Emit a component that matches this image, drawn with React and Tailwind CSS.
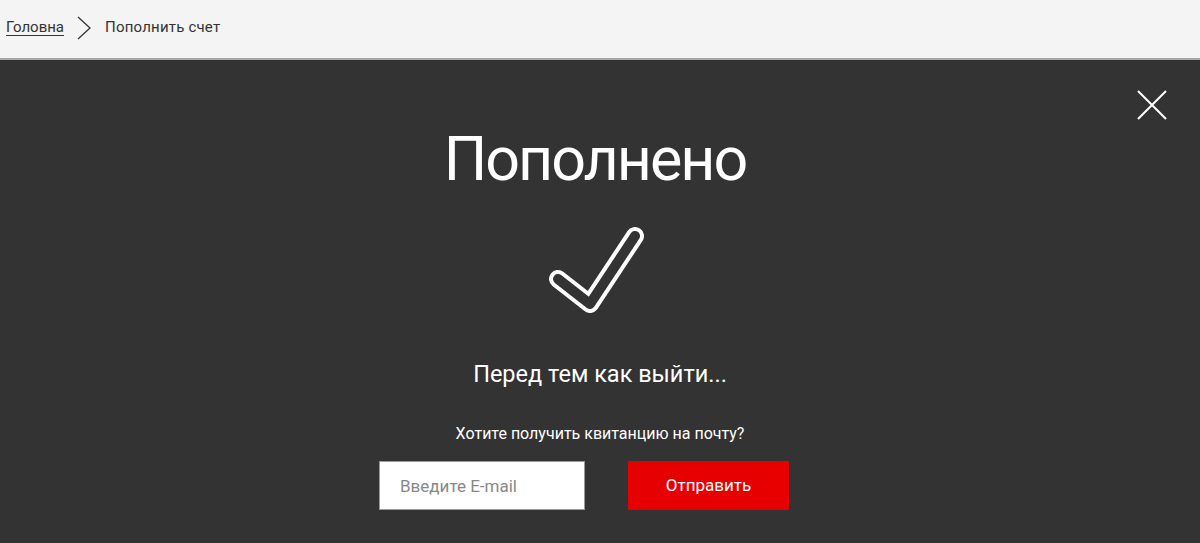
import React from "react";

const CloseIcon = () => (
  <svg width="30" height="30" viewBox="0 0 30 30" className="block">
    <path d="M1 1 L29 29 M29 1 L1 29" stroke="#ffffff" strokeWidth="2" fill="none" />
  </svg>
);

// галочка с обводкой
const CheckOutline = () => (
  <svg width="110" height="100" viewBox="0 0 110 100" className="block">
    <path
      d="M17 59 L49 84 L94 16"
      stroke="#ffffff"
      strokeWidth="18"
      strokeLinecap="round"
      strokeLinejoin="round"
      fill="none"
    />
    <path
      d="M17 59 L49 84 L94 16"
      stroke="#333333"
      strokeWidth="10"
      strokeLinecap="round"
      strokeLinejoin="round"
      fill="none"
    />
  </svg>
);

export default function App() {
  return (
    <div className="w-[1200px] h-[543px] overflow-hidden bg-[#333333] font-['Roboto','Noto_Sans',sans-serif]">
      <div className="h-[60px] bg-[#f4f4f4] border-b-2 border-[#a6a6a6] flex items-center pl-[6px] pb-[3px] text-[15px] text-[#333333]">
        <a href="#" className="underline underline-offset-[3px] decoration-1 leading-none">
          Головна
        </a>
        <svg width="14" height="24" viewBox="0 0 14 24" className="ml-[13px] mr-[14px] block">
          <path d="M1 1 L13 12 L1 23" stroke="#333333" strokeWidth="1.3" fill="none" />
        </svg>
        <span className="leading-none tracking-[0.2px]">Пополнить счет</span>
      </div>

      <div className="relative flex flex-col items-center text-white">
        <button className="absolute right-[33px] top-[30px]">
          <CloseIcon />
        </button>

        <h1 className="mt-[59px] ml-[-10px] text-[61px] leading-[80px] font-normal tracking-[-2px]">Пополнено</h1>
        <div className="mt-[21px] mr-[8px]">
          <CheckOutline />
        </div>
        <p className="mt-[39px] text-[23.5px] leading-[30px]">Перед тем как выйти...</p>
        <p className="mt-[35px] text-[16px] leading-[20px]">Хотите получить квитанцию на почту?</p>
        <div className="mt-[17px] mr-[32px] flex gap-[43px]">
          <input
            type="text"
            placeholder="Введите E-mail"
            className="w-[206px] h-[49px] bg-white border border-[#9a9a9a] px-[20px] text-[17px] text-[#333] placeholder:text-[#888888] outline-none"
          />
          <button className="w-[161px] h-[49px] bg-[#e60000] text-white text-[17px]">
            Отправить
          </button>
        </div>
      </div>
    </div>
  );
}
